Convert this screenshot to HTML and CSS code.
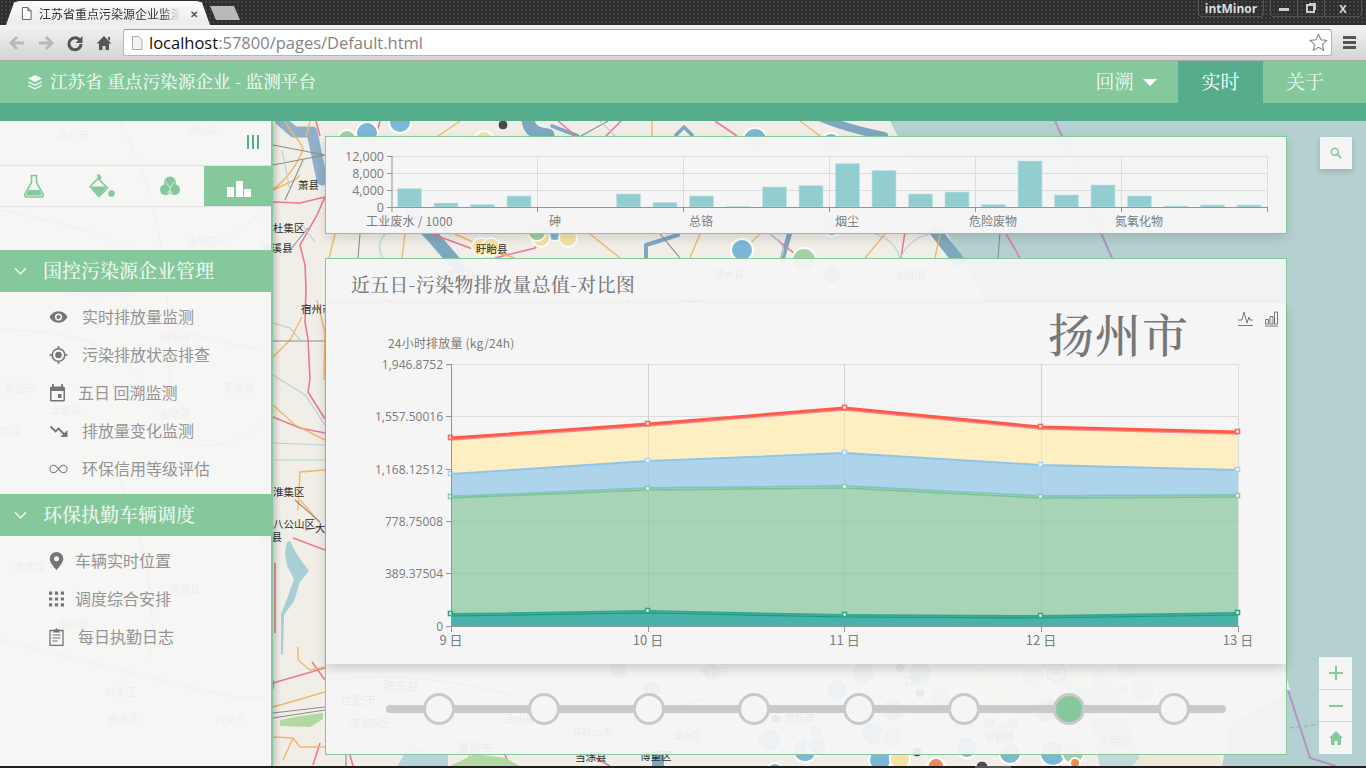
FILE: index.html
```html
<!DOCTYPE html>
<html lang="zh-CN">
<head>
<meta charset="utf-8">
<title>江苏省重点污染源企业监测平台</title>
<link rel="stylesheet" href="styles.css">
</head>
<body>
<div class="browser">
  <div class="tabstrip">
    <div class="tab">
      <svg class="tab-file" viewBox="0 0 12 14"><path d="M1.500.5h6l3.500 3.500v9.500h-9.500zM7.500.5v3.500h3.500" fill="#fff" stroke="#555"/></svg>
      <span class="tab-title">江苏省重点污染源企业监测</span>
      <span class="tab-close">✕</span>
    </div>
    <div class="newtab"></div>
    <div class="winbtns">
      <div class="winuser">intMinor</div>
      <div class="wincontrols">
        <div class="winc"><span class="wmin"></span></div>
        <div class="winc"><span class="wmax"></span></div>
        <div class="winc wclose">X</div>
      </div>
    </div>
  </div>
  <div class="toolbar">
    <svg class="navi" viewBox="0 0 18 18"><path d="M16 9H4M9 3L3 9l6 6" fill="none" stroke="#b9b9b9" stroke-width="3"/></svg>
    <svg class="navi" viewBox="0 0 18 18"><path d="M2 9h12M9 3l6 6-6 6" fill="none" stroke="#b9b9b9" stroke-width="3"/></svg>
    <svg class="navi" viewBox="0 0 18 18"><path d="M14 6.500A6 6 0 1 0 15 10" fill="none" stroke="#555" stroke-width="3"/><path d="M16.500 2v7h-7z" fill="#555"/></svg>
    <svg class="navi" viewBox="0 0 18 18"><path d="M9 2L1.500 9.500H4V16h3.500v-4h3v4H14V9.500h2.500z M13 3h2v4l-2-2z" fill="#555"/></svg>
    <div class="omnibox">
      <svg class="omni-file" viewBox="0 0 12 14"><path d="M1.500.5h6l3.500 3.500v9.500h-9.500z" fill="#f4f4f4" stroke="#aaa"/></svg>
      <span class="host">localhost</span><span class="urlrest">:57800/pages/Default.html</span>
      <svg class="star" viewBox="0 0 20 20"><path d="M10 1.500l2.600 5.600 6.100.7-4.500 4.200 1.200 6.100L10 15.100l-5.400 3 1.200-6.100-4.500-4.200 6.100-.7z" fill="#fff" stroke="#888" stroke-width="1.200"/></svg>
    </div>
    <div class="burger"><i></i><i></i><i></i></div>
  </div>
</div>

<header class="appbar">
  <div class="brand">
    <svg class="brand-icon" viewBox="0 0 16 16"><path d="M8 1l7 3.500L8 8 1 4.500z M1.500 7.200L8 10.400l6.500-3.200L15 8.500 8 12 1 8.500z M1.500 10.700L8 13.900l6.500-3.200.5 1.300L8 15.500 1 12z" fill="#f2faf5"/></svg>
    <span>江苏省 重点污染源企业 - 监测平台</span>
  </div>
  <nav class="nav">
    <div class="nav-item nav-back">回溯<span class="caret"></span></div>
    <div class="nav-item nav-active">实时</div>
    <div class="nav-item">关于</div>
  </nav>
</header>
<div class="subbar"></div>

<main class="stage">
  <svg class="map" viewBox="0 121 1366 645" preserveAspectRatio="none">
    <rect x="0" y="121" width="1366" height="645" fill="#b5d0d0"/>
    <path d="M0 121H890L905 150 960 258 1030 370 1120 500 1200 600 1280 655 1290 690 1230 725 1222 766H0z" fill="#f1eee8"/>
    <path d="M1100 766L1090 720 1060 680 1010 640 950 560 880 480H960L1040 600 1120 690 1142 766z" fill="#c4dada"/>
    <path d="M1055 121l7 15 40 99 10 23M1288 690l22 68 26 8" stroke="#b294c4" stroke-width="2" fill="none"/>
    <path d="M1290 728l50-6M1320 745l30-8" stroke="#8f9fe0" stroke-width="1" stroke-dasharray="4 3" fill="none"/>
    <path d="M398 766l10-20 40 8v12z" fill="#b5d4dc"/>
    <!-- rivers -->
    <g fill="none" stroke="#7fa8c0" stroke-linejoin="round" stroke-linecap="round">
      <path stroke-width="11" stroke="#8fb0c8" d="M280 120l14 12h18l10 48"/>
      <path stroke-width="13" d="M528 118c0 10 6 16 20 17"/>
      <path stroke-width="3.500" d="M552 126l26 10M676 135l8-8 8 8"/>
      <path stroke-width="8" d="M822 118c14 6 34 12 62 18"/>
      <path stroke-width="13" d="M412 214l22 24 24 28"/>
      <path stroke-width="4" d="M646 258v-13l32-10"/>
      <path stroke-width="5" d="M790 232l-8 28"/>
      <path stroke-width="12" d="M936 232l22 28"/>
      <path stroke-width="12" d="M658 756v12"/>
    </g>
    <!-- pink roads -->
    <path fill="none" stroke="#e87a95" stroke-width="1.600" d="M273 202l27 1 25-6M325 197l-8 18-17 30 5 20 1 23-1 34 3 17 2 40-2 13 17 27M273 417l27 11 25 5M293 538l32 12M275 563v70M273 683l52-15M312 662l13 18M320 743l-7 22M316 121l4 15M380 121l-4 15M558 121l18 15M621 121l-15 15M715 121l22 15M432 234l60 22M495 258l40-10 10-14M770 234l30 24M905 232l-4 26M1005 232l15 26M350 755l3 11M505 755l5 11M590 755l20 11M1050 755l10 11M1190 755l-12 11"/>
    <!-- faint under-panel roads -->
    <path fill="none" stroke="#e87a95" stroke-width="1.300" d="M0 210q60 12 90 22l50 20q60 22 133 -50M0 270q100 60 273 -20M120 300q60 40 150 50M0 330q110 0 140 50l40 60q50 20 93 -30M120 121q30 60 40 120t10 150M120 480q40 100 30 180M0 640q120 30 200 50t73-10M330 680q100-10 200 20t200-10M360 270q50 60 120 90t140 0 180 40M620 270q40 130-10 210"/>
    <!-- orange roads -->
    <path fill="none" stroke="#f2b66a" stroke-width="1.400" d="M285 121c5 12 15 18 18 28-5 16-20 34-30 40M273 190l22-10 5-5M302 317l-12 23-17 17M317 300l8 33-1 47M273 405l22 20 30 15M325 470l-25 2-2 38M300 500l20 23M298 647v13l12 10 15-3M273 707l52-15M273 737l20 1 7 9h25M293 738l-10 22M310 121l-4 15M438 136l22-15M652 121v15M800 121l20 15M335 234l-6 24M405 234l-3 24M455 234l40 18 20 6M590 234l30 24M700 234l-10 24M760 234q-15 12-15 24M885 234l-20 24M940 234l-5 24M470 755l-5 11M1170 755l-10 11"/>
    <!-- gray roads -->
    <path fill="none" stroke="#8d8d8d" stroke-width="1.100" d="M273 341h52M273 713l52-6M273 718l52-8M581 136l27-15M290 250l18-22M285 200l18-40M273 145l52 10M273 165l52-10M346 755v11M360 234l-2 24M660 234l20 24M1000 232l-2 26M295 500l25 22M305 530l15-3"/>
    <!-- thin blue lines -->
    <path fill="none" stroke="#b4d3d4" stroke-width="1.200" d="M273 323l17 5 10 12M273 375l32 20 20 30M273 443l52 2M273 460l52 0M282 150l8 40M300 222l15 20M600 121l15 15M385 234q-10 12-2 24M770 234q20 14 10 24M875 234q20 6 25 24M930 234q-20 4-30 24"/>
    <path d="M290 541l8 15 11 15-9 11-6 19-10 14-1 40-2-1v-40l7-18 6-17-7-13-2-13 2-11z" fill="#a9cfd6"/>
    <path d="M280 720l20-4 23-3v6l-13 8-30-1z" fill="#b3d9a3"/>
    <path d="M450 766l25-12 30 4 15 8z" fill="#b3d9a3"/>
    <path d="M1142 755h72q8 0 8 11h-90z" fill="#efe8d8"/>

    <!-- bubbles -->
    <g stroke="#fff" stroke-width="2">
      <g fill="#7db7d8">
        <circle cx="367" cy="133" r="11"/><circle cx="400" cy="122" r="11"/><circle cx="755" cy="140" r="12"/><circle cx="831" cy="143" r="10"/><circle cx="555" cy="232" r="9"/><circle cx="742" cy="250" r="11"/><circle cx="832" cy="226" r="10"/><circle cx="832" cy="274" r="10"/>
        <circle cx="619" cy="670" r="10"/><circle cx="651" cy="690" r="10"/><circle cx="712" cy="672" r="10"/><circle cx="837" cy="690" r="11"/><circle cx="769" cy="740" r="12"/><circle cx="805" cy="750" r="12"/><circle cx="817" cy="745" r="10"/><circle cx="775" cy="771" r="8"/>
        <circle cx="863" cy="673" r="12"/><circle cx="920" cy="673" r="12"/><circle cx="860" cy="707" r="12"/><circle cx="893" cy="710" r="12"/><circle cx="1057" cy="673" r="12"/><circle cx="873" cy="733" r="12"/><circle cx="1047" cy="710" r="13"/><circle cx="1053" cy="753" r="13"/><circle cx="1010" cy="753" r="11"/><circle cx="880" cy="760" r="11"/><circle cx="967" cy="747" r="11"/>
      </g>
      <g fill="#f6e3a4">
        <circle cx="484" cy="141" r="10"/><circle cx="481" cy="247" r="9"/><circle cx="491" cy="247" r="9"/><circle cx="541" cy="238" r="9"/><circle cx="568" cy="238" r="9"/>
        <circle cx="1083" cy="680" r="9"/><circle cx="980" cy="677" r="10"/><circle cx="900" cy="759" r="10"/><circle cx="943" cy="737" r="9"/><circle cx="1000" cy="693" r="9"/>
      </g>
      <g fill="#a5cfa5">
        <circle cx="347" cy="139" r="9"/><circle cx="537" cy="232" r="9"/><circle cx="804" cy="260" r="12"/><circle cx="1033" cy="677" r="12"/><circle cx="1127" cy="670" r="11"/><circle cx="1143" cy="690" r="12"/><circle cx="940" cy="697" r="11"/><circle cx="1003" cy="733" r="12"/><circle cx="893" cy="737" r="11"/><circle cx="1073" cy="753" r="11"/>
      </g>
      <g fill="#ee9a84">
        <circle cx="816" cy="731" r="7"/><circle cx="692" cy="302" r="7"/><circle cx="1123" cy="690" r="6"/><circle cx="990" cy="723" r="7"/><circle cx="1013" cy="723" r="7"/><circle cx="1056" cy="672" r="6"/>
      </g>
      <circle cx="936" cy="766" r="8" fill="#ec8a55"/>
      <circle cx="1075" cy="763" r="5" fill="#ec8a55"/>
    </g>
    <g fill="#4b4b49" stroke="#fff">
      <circle cx="503" cy="125" r="5"/><circle cx="982" cy="767" r="6"/><circle cx="776" cy="719" r="5"/><circle cx="900" cy="668" r="5"/><circle cx="920" cy="693" r="5"/><circle cx="917" cy="752" r="5"/>
    </g>

    <g class="maptext">
      <text x="298" y="189">萧县</text><text x="273" y="232">杜集区</text><text x="261" y="252">濉溪县</text><text x="301" y="313">宿州市</text>
      <text x="273" y="496">淮集区</text><text x="273" y="528">八公山区</text><text x="261" y="541">寿县</text><text x="315" y="532">大</text>
      <text x="476" y="253">盱眙县</text><text x="575" y="761">当涂县</text><text x="640" y="760">博望区</text>
    </g>
    <g class="maptext mapfaint">
      <text x="58" y="139">商丘市</text><text x="187" y="134">砀山县</text><text x="188" y="245">永城市</text><text x="160" y="341">涡阳县</text><text x="224" y="392">蒙城县</text><text x="4" y="392">界首市</text><text x="51" y="414">太和县</text><text x="160" y="418">利辛县</text><text x="0" y="435">泉县</text>
      <text x="14" y="571">淮滨县</text><text x="170" y="593">霍邱县</text><text x="58" y="628">固始县</text><text x="106" y="696">叶集区</text><text x="108" y="723">金寨县</text><text x="215" y="723">六安市</text>
      <text x="714" y="278">涟水县</text><text x="897" y="280">射阳县</text><text x="445" y="278">泗洪县</text>
      <text x="340" y="655">北城新区</text><text x="700" y="676">句容市</text><text x="785" y="722">金坛市</text>
      <text x="900" y="685">江阴</text><text x="1100" y="745">崇明区</text><text x="985" y="742">常熟市</text>
      <text x="350" y="727">滨湖新区</text><text x="505" y="722">含山县</text><text x="572" y="736">马鞍山市</text><text x="672" y="740">溧水区</text>
    </g>
    <g class="maptext mapbig">
      <text x="383" y="691">肥东县</text><text x="340" y="705">合肥市</text><text x="457" y="753">巢湖市</text>
    </g>
  </svg>

  <aside class="sidebar">
    <div class="side-top">
      <svg class="side-toggle" viewBox="0 0 12 14"><path d="M1 0v14M6 0v14M11 0v14" stroke="#55ad8b" stroke-width="2"/></svg>
    </div>
    <div class="side-tabs">
      <div class="side-tab">
        <svg viewBox="0 0 22 24"><path d="M7.500 1.500h7M8.500 1.500v7L2 20a2 2 0 0 0 1.800 3h14.400A2 2 0 0 0 20 20L13.500 8.500v-7" fill="none" stroke="#85c89c" stroke-width="1.600"/><path d="M5.500 16h11l2.500 5.500H3z" fill="#85c89c"/></svg>
      </div>
      <div class="side-tab">
        <svg class="ico-bucket" viewBox="0 0 26 24"><path d="M9 .5l2.500 4.500" stroke="#85c89c" stroke-width="3" fill="none"/><path d="M1 12.500L9 4.500l9.500 9.500L10 22.500z" fill="#f5f5f5" stroke="#85c89c" stroke-width="1.600"/><path d="M1.500 12.500h16.500l-8 9.500z" fill="#85c89c"/><circle cx="22.500" cy="19.500" r="3.200" fill="#85c89c"/></svg>
      </div>
      <div class="side-tab">
        <svg class="ico-tri" viewBox="0 0 22 22"><circle cx="11" cy="7" r="6.500" fill="#85c89c"/><circle cx="6" cy="15" r="6" fill="#85c89c"/><circle cx="16" cy="15" r="6" fill="#85c89c"/><path d="M6 6l5 7 5-7M11 13v7M8 19l3-3 3 3" fill="none" stroke="#f5f5f5" stroke-width=".9"/></svg>
      </div>
      <div class="side-tab side-tab-on">
        <svg viewBox="0 0 24 16"><path d="M0 6h7v10H0zM9 0h7v16H9zM17 8h7v8h-7z" fill="#fff"/></svg>
      </div>
    </div>

    <div class="group group-first">
      <svg class="chev" viewBox="0 0 14 8"><path d="M1 1l6 6 6-6" fill="none" stroke="#eef8f1" stroke-width="1.500"/></svg>
      <span>国控污染源企业管理</span>
    </div>
    <ul class="menu">
      <li><svg viewBox="0 0 20 14"><path d="M10 1C5.500 1 2 4 .5 7 2 10 5.500 13 10 13s8-3 9.500-6C18 4 14.500 1 10 1z" fill="#757575"/><circle cx="10" cy="7" r="3.800" fill="#f5f5f5"/><circle cx="10" cy="7" r="2.200" fill="#757575"/></svg><span>实时排放量监测</span></li>
      <li><svg viewBox="0 0 20 20"><circle cx="10" cy="10" r="7" fill="none" stroke="#757575" stroke-width="1.800"/><circle cx="10" cy="10" r="3.600" fill="#757575"/><path d="M10 0v3M10 17v3M0 10h3M17 10h3" stroke="#757575" stroke-width="1.800"/></svg><span>污染排放状态排查</span></li>
      <li class="li-cal"><svg viewBox="0 0 16 18"><path d="M2 2.500h12a1.500 1.500 0 0 1 1.500 1.500v12a1.500 1.500 0 0 1-1.500 1.500H2A1.500 1.500 0 0 1 .5 16V4A1.500 1.500 0 0 1 2 2.500z" fill="#757575"/><path d="M3.500 0v3M12.500 0v3" stroke="#757575" stroke-width="1.800"/><path d="M2 7h12v9H2z" fill="#f5f5f5"/><path d="M8.500 10H12v4H8.500z" fill="#757575"/></svg><span>五日 回溯监测</span></li>
      <li class="li-trend"><svg viewBox="0 0 18 12"><path d="M1 1.500l5 5 3-3 7 7" fill="none" stroke="#757575" stroke-width="1.800"/><path d="M18 5v7h-7z" fill="#757575"/></svg><span>排放量变化监测</span></li>
      <li><svg viewBox="0 0 20 10"><path d="M5 1a4 4 0 1 0 0 8c4 0 6-8 10-8a4 4 0 1 1 0 8C11 9 9 1 5 1z" fill="none" stroke="#757575" stroke-width="1.100"/></svg><span>环保信用等级评估</span></li>
    </ul>

    <div class="group">
      <svg class="chev" viewBox="0 0 14 8"><path d="M1 1l6 6 6-6" fill="none" stroke="#eef8f1" stroke-width="1.500"/></svg>
      <span>环保执勤车辆调度</span>
    </div>
    <ul class="menu menu-b">
      <li><svg viewBox="0 0 14 18"><path d="M7 0a6.800 6.800 0 0 0-6.800 6.800C.2 11.500 7 18 7 18s6.800-6.500 6.800-11.200A6.800 6.800 0 0 0 7 0z" fill="#757575"/><circle cx="7" cy="6.800" r="2.500" fill="#f5f5f5"/></svg><span>车辆实时位置</span></li>
      <li><svg viewBox="0 0 14 14"><path d="M0 0h3v3H0zM5.500 0h3v3h-3zM11 0h3v3h-3zM0 5.500h3v3H0zM5.500 5.500h3v3h-3zM11 5.500h3v3h-3zM0 11h3v3H0zM5.500 11h3v3h-3zM11 11h3v3h-3z" fill="#757575"/></svg><span>调度综合安排</span></li>
      <li class="li-clip"><svg viewBox="0 0 15 18"><path d="M1 2.500h13v15H1z" fill="none" stroke="#757575" stroke-width="1.300"/><path d="M5 3V1.500h1.500L7.500 0l1 1.500H10V3l1 1.500H4z" fill="#757575"/><path d="M3.500 7h8M3.500 10h8M3.500 13h5" stroke="#757575" stroke-width="1.100"/></svg><span>每日执勤日志</span></li>
    </ul>
  </aside>

  <section class="content">
    <div class="panel panel-bars">
      <svg class="chart" width="960" height="96" viewBox="326 137 960 96">
        <g class="grid">
          <path d="M392 156.500H1267M392 173.500H1267M392 190.500H1267M537.500 156.500V207M683.500 156.500V207M829.500 156.500V207M975.500 156.500V207M1121.500 156.500V207M1267.500 156.500V207"/>
        </g>
        <g class="bars">
          <rect x="397.500" y="188.500" width="24" height="18.500"/><rect x="434" y="203" width="24" height="4"/><rect x="470.500" y="204.500" width="24" height="2.500"/><rect x="507" y="196" width="24" height="11"/>
          <rect x="616.500" y="194" width="24" height="13"/><rect x="653" y="202.500" width="24" height="4.500"/><rect x="689.500" y="196" width="24" height="11"/><rect x="726" y="206.500" width="24" height=".5"/>
          <rect x="762.500" y="187" width="24" height="20"/><rect x="799" y="185.500" width="24" height="21.500"/><rect x="835.500" y="163.500" width="24" height="43.500"/><rect x="872" y="170.500" width="24" height="36.500"/>
          <rect x="908.500" y="194" width="24" height="13"/><rect x="945" y="192" width="24" height="15"/><rect x="981.500" y="204.500" width="24" height="2.500"/><rect x="1018" y="161" width="24" height="46"/>
          <rect x="1054.500" y="195" width="24" height="12"/><rect x="1091" y="185" width="24" height="22"/><rect x="1127.500" y="196" width="24" height="11"/><rect x="1164" y="206" width="24" height="1"/>
          <rect x="1200.500" y="205" width="24" height="2"/><rect x="1237" y="205" width="24" height="2"/>
        </g>
        <path class="axis" d="M392 156V207M387 156.500H392M387 173.500H392M387 190.500H392M387 207.500H1267M392 207V212M537.500 207V212M683.500 207V212M829.500 207V212M975.500 207V212M1121.500 207V212M1267.500 207V212"/>
        <g class="axis-label right big">
          <text x="384" y="161">12,000</text><text x="384" y="178">8,000</text><text x="384" y="195">4,000</text><text x="384" y="212">0</text>
        </g>
        <g class="axis-label">
          <text class="wide" x="366" y="226">工业废水 / 1000</text><text x="549" y="226">砷</text><text x="689" y="226">总铬</text><text x="835" y="226">烟尘</text><text x="969" y="226">危险废物</text><text x="1115" y="226">氮氧化物</text>
        </g>
      </svg>
    </div>

    <div class="panel panel-main">
      <h2 class="panel-title">近五日-污染物排放量总值-对比图</h2>
      <div class="chart-card">
        <svg class="chart" width="960" height="361" viewBox="326 303 960 361">
          <path class="grid" d="M451 364.500H1238M451 416.500H1238M451 469.500H1238M451 521.500H1238M451 573.500H1238M648.500 364V626M844.500 364V626M1041.500 364V626M1238.500 364V626"/>
          <path fill="#fdeebf" fill-opacity=".95" d="M451 438L648 424 844.500 408 1041 427 1238 432V470L1041 465 844.500 453 648 461 451 474z"/>
          <path fill="#aed4ec" d="M451 474L648 461 844.500 453 1041 465 1238 470V496L1041 497 844.500 487 648 489 451 497z"/>
          <path fill="#a7d4b6" d="M451 497L648 489 844.500 487 1041 497 1238 496V613L1041 616 844.500 615 648 611 451 614z"/>
          <path fill="#48b2ab" d="M451 614L648 611 844.500 615 1041 616 1238 613V626H451z"/>
          <path class="grid-over" d="M451 521.500H1238M451 573.500H1238M648.500 364V626M844.500 364V626M1041.500 364V626"/>
          <g fill="none">
            <path stroke="#f08fa0" stroke-width="2.500" d="M451 439.500L648 425.500 844.500 409.500 1041 428.500 1238 433.500"/>
            <path stroke="#ff5a45" stroke-width="2.800" d="M451 438L648 424 844.500 408 1041 427 1238 432"/>
            <path stroke="#8cc5e8" stroke-width="1.800" d="M451 474L648 461 844.500 453 1041 465 1238 470"/>
            <path stroke="#82c6bc" stroke-width="1.800" d="M451 496.500L648 488 844.500 486 1041 496 1238 495"/>
            <path stroke="#7cc295" stroke-width="1.500" d="M451 498L648 490 844.500 488 1041 498 1238 497"/>
            <path stroke="#3aa886" stroke-width="1.800" d="M451 614L648 611 844.500 615 1041 616 1238 613"/>
            <path stroke="#0f9d8d" stroke-width="1.200" d="M451 616L648 613 844.500 617 1041 618 1238 615"/>
          </g>
          <g class="pts pts-red"><rect x="448.500" y="435.500" width="4" height="4"/><rect x="645.500" y="421.500" width="4" height="4"/><rect x="842.500" y="405.500" width="4" height="4"/><rect x="1038.500" y="424.500" width="4" height="4"/><rect x="1235.500" y="429.500" width="4" height="4"/></g>
          <g class="pts pts-blue"><rect x="448.500" y="471.500" width="4" height="4"/><rect x="645.500" y="458.500" width="4" height="4"/><rect x="842.500" y="450.500" width="4" height="4"/><rect x="1038.500" y="462.500" width="4" height="4"/><rect x="1235.500" y="467.500" width="4" height="4"/></g>
          <g class="pts pts-green"><rect x="448.500" y="494.500" width="4" height="4"/><rect x="645.500" y="486.500" width="4" height="4"/><rect x="842.500" y="484.500" width="4" height="4"/><rect x="1038.500" y="494.500" width="4" height="4"/><rect x="1235.500" y="493.500" width="4" height="4"/></g>
          <g class="pts pts-teal"><rect x="448.500" y="611.500" width="4" height="4"/><rect x="645.500" y="608.500" width="4" height="4"/><rect x="842.500" y="612.500" width="4" height="4"/><rect x="1038.500" y="613.500" width="4" height="4"/><rect x="1235.500" y="610.500" width="4" height="4"/></g>
          <path class="axis" d="M451.500 364V626M446 364.500H451M446 416.500H451M446 469.500H451M446 521.500H451M446 573.500H451M446 626.500H1238M451.500 626V632M648.500 626V632M844.500 626V632M1041.500 626V632M1238.500 626V632"/>
          <g class="axis-label right">
            <text x="443" y="369">1,946.8752</text><text x="443" y="421">1,557.50016</text><text x="443" y="474">1,168.12512</text><text x="443" y="526">778.75008</text><text x="443" y="578">389.37504</text><text x="443" y="631">0</text>
          </g>
          <g class="axis-label center">
            <text x="451" y="645">9 日</text><text x="648" y="645">10 日</text><text x="844.500" y="645">11 日</text><text x="1041" y="645">12 日</text><text x="1238" y="645">13 日</text>
          </g>
          <text class="axis-label unit" x="388" y="348">24小时排放量 (kg/24h)</text>
          <text class="city" x="1048" y="352">扬州市</text>
          <g class="toolicon">
            <path d="M1238 320h4l2-8 3 11 2-6 1 3h3M1238 325.500h15"/>
            <path d="M1265.500 319.500h3v4.500h-3zM1270 316.500h3v7.500h-3zM1274.500 312h3v12h-3zM1265 326h13"/>
          </g>
        </svg>
      </div>
      <div class="timeline">
        <div class="track"></div>
        <div class="nodes">
          <span class="node"></span><span class="node"></span><span class="node"></span><span class="node"></span><span class="node"></span><span class="node"></span><span class="node node-on"></span><span class="node"></span>
        </div>
      </div>
    </div>
  </section>

  <div class="tool tool-search">
    <svg viewBox="0 0 14 14"><circle cx="5.500" cy="5.500" r="4" fill="none" stroke="#85c89c" stroke-width="1.800"/><path d="M8.500 8.500l4.500 4.500" stroke="#85c89c" stroke-width="2.200"/></svg>
  </div>
  <div class="zoombox">
    <div class="zoomb"><svg viewBox="0 0 14 14"><path d="M7 0v14M0 7h14" stroke="#85c89c" stroke-width="2"/></svg></div>
    <div class="zoomb"><svg viewBox="0 0 14 14"><path d="M0 7h14" stroke="#85c89c" stroke-width="2"/></svg></div>
    <div class="zoomb"><svg viewBox="0 0 14 14"><path d="M7 0L0 7h2v7h3.500v-4h3v4H12V7h2z" fill="#85c89c"/></svg></div>
  </div>
</main>
<div class="taskedge"><span></span></div>
</body>
</html>
```
FILE: styles.css
```css
* { box-sizing: border-box; }
html, body { margin: 0; height: 100%; }
body {
  width: 1366px; height: 768px; overflow: hidden;
  display: flex; flex-direction: column;
  font-family: "Noto Sans CJK SC", "Open Sans", sans-serif;
  background: #222;
}
ul { list-style: none; margin: 0; padding: 0; }

/* browser frame */
.browser { flex: none; height: 61px; display: flex; flex-direction: column; }
.tabstrip {
  flex: none; height: 25px; display: flex; align-items: flex-end; padding-left: 6px; gap: 3px;
  background-color: #2e2e2e;
  background-image: radial-gradient(#444 1px, transparent 1px);
  background-size: 4px 4px;
}
.tab {
  width: 204px; height: 24px; display: flex; align-items: center; padding: 0 12px 0 15px;
  background: linear-gradient(#fafafa, #ececec);
  clip-path: polygon(0 100%, 8px 6%, 13px 0, 191px 0, 196px 6%, 204px 100%);
  font-size: 12px; color: #333;
}
.tab-file { width: 11px; height: 13px; margin-right: 7px; flex: none; }
.tab-title {
  width: 141px; overflow: hidden; white-space: nowrap; flex: none;
  -webkit-mask-image: linear-gradient(90deg, #000 88%, transparent);
  mask-image: linear-gradient(90deg, #000 88%, transparent);
}
.tab-close { margin-left: auto; font-size: 10px; font-weight: 700; color: #555; }
.newtab {
  width: 30px; height: 14px; margin: 0 0 5px -3px; background: #b9b9b9;
  clip-path: polygon(0 0, 24px 0, 30px 100%, 6px 100%);
}
.winbtns { margin-left: auto; align-self: flex-start; display: flex; gap: 6px; margin-right: 4px; }
.winuser {
  width: 66px; height: 17px; text-align: center; color: #ddd;
  font: 700 12px/17px "Open Sans", sans-serif;
  border: 1px solid #555; border-top: 0; border-radius: 0 0 4px 4px;
}
.wincontrols {
  width: 92px; height: 17px; display: flex; border: 1px solid #555; border-top: 0; border-radius: 0 0 4px 4px;
}
.winc { flex: 1; display: flex; align-items: center; justify-content: center; border-left: 1px solid #555; color: #ddd; }
.winc:first-child { border-left: 0; }
.wclose { flex: 1.400; font: 700 11px "Open Sans", sans-serif; }
.wmin { width: 10px; height: 3px; background: #ccc; margin-top: 3px; }
.wmax { width: 9px; height: 9px; border: 2px solid #ccc; box-shadow: 2px -2px 0 -1px #ccc; }
.toolbar {
  flex: 1; display: flex; align-items: center; padding: 0 8px; gap: 11px;
  background: linear-gradient(#f3f3f3, #d4d4d4);
  border-bottom: 1px solid #a8a8a8;
}
.navi { width: 18px; height: 18px; flex: none; }
.omnibox {
  flex: 1; height: 27px; margin-left: -1px; display: flex; align-items: center; padding-left: 7px;
  background: #fff; border: 1px solid #b4b4b4; border-top-color: #999; border-radius: 3px;
  font: 16.500px/25px "Open Sans", sans-serif; color: #848484;
}
.omni-file { width: 12px; height: 14px; margin-right: 6px; flex: none; }
.host { color: #111; }
.star { width: 19px; height: 19px; margin-left: auto; margin-right: 3px; }
.burger { width: 13px; display: flex; flex-direction: column; gap: 2px; margin-right: 2px; }
.burger i { display: block; height: 3px; background: #555; }

/* app header */
.appbar {
  flex: none; height: 42px; display: flex; align-items: stretch; justify-content: space-between;
  background: #85c89c; color: #eef8f1;
  font-family: "Noto Serif CJK SC", "Noto Sans CJK SC", serif;
}
.brand { display: flex; align-items: center; gap: 7px; padding: 0 0 3px 27px; font-size: 17.600px; font-weight: 500; }
.brand-icon { width: 16px; height: 16px; margin-top: 3px; }
.nav { display: flex; padding-right: 19px; }
.nav-item { width: 84px; display: flex; align-items: center; justify-content: center; font-size: 19px; padding-bottom: 3px; }
.nav-back { width: 92px; gap: 9px; padding-right: 12px; }
.nav-active { background: #55ad8b; color: #fff; width: 85px; }
.caret { width: 0; height: 0; border: 7px solid transparent; border-top: 7px solid #fff; border-bottom: 0; margin-top: 4px; }
.subbar { flex: none; height: 18px; background: #55ad8b; }

/* map stage */
.stage { flex: none; height: 645px; position: relative; display: flex; overflow: hidden; background: #f1eee8; }
.map { position: absolute; inset: 0; width: 100%; height: 100%; }
.maptext text { font-size: 10.500px; fill: #2c2c2c; }
.mapfaint text { fill: #555; font-size: 10px; }
.mapbig text { fill: #555; font-size: 12px; }

/* sidebar */
.sidebar {
  flex: none; width: 273px; position: relative;
  background: rgba(246,246,246,.95);
  border-right: 2px solid #85c89c;
  box-shadow: 3px 0 6px rgba(0,0,0,.2);
}
.side-top { height: 44px; display: flex; align-items: flex-start; justify-content: flex-end; padding: 14px 12px 0 0; }
.side-toggle { width: 12px; height: 14px; }
.side-tabs {
  height: 42px; display: grid; grid-template-columns: 68px 68px 68px 67px;
  border-top: 1px solid #e3e3e3; border-bottom: 1px solid #e3e3e3;
}
.side-tab { display: flex; align-items: center; justify-content: center; }
.side-tab svg { width: 22px; height: 24px; }
.side-tab .ico-bucket { width: 26px; }
.side-tab .ico-tri { width: 20px; height: 20px; }
.side-tab-on { background: #85c89c; margin-right: -2px; }
.side-tab-on svg { width: 24px; height: 16px; margin-top: 5px; }
.group {
  height: 42px; display: flex; align-items: center; gap: 16px; padding: 0 0 0 14px;
  background: #85c89c; color: #eef8f1; margin-right: -2px;
  font-family: "Noto Serif CJK SC", "Noto Sans CJK SC", serif; font-size: 19px; font-weight: 500;
}
.group span { margin-top: -3px; }
.group-first { margin-top: 43px; }
.chev { width: 13px; height: 8px; }
.menu { padding: 6px 0 6px 49px; }
.menu li { height: 38px; display: flex; align-items: center; gap: 14px; color: #949494; font-size: 16px; }
.menu li span { margin-top: -2px; }
.menu svg { width: 19px; height: 18px; flex: none; }
.menu .li-cal { gap: 12px; }
.menu .li-cal svg { width: 17px; }
.menu .li-trend svg { height: 12px; }
.menu-b li { gap: 11px; }
.menu-b svg { width: 15px !important; }
.li-clip { gap: 14px !important; }

/* content */
.content { flex: 1; padding: 15px 79px 0 52px; display: flex; flex-direction: column; gap: 24px; position: relative; }
.panel {
  border: 1px solid #85c89c;
  background: rgba(245,245,245,.93);
}
.panel-bars { height: 98px; background: rgba(245,245,245,.97); box-shadow: 0 4px 10px rgba(0,0,0,.12); }
.panel-main { height: 497px; display: flex; flex-direction: column; background: rgba(245,245,245,.93); }
.panel-title {
  flex: none; height: 44px; margin: 0; padding: 14px 0 0 25px;
  font: 500 18.800px/22px "Noto Serif CJK SC", "Noto Sans CJK SC", serif; color: #7b7b7b; letter-spacing: .5px;
}
.chart-card { flex: none; height: 361px; background: rgba(245,245,245,.97); box-shadow: 0 5px 10px rgba(0,0,0,.16); position: relative; }
.chart { display: block; overflow: visible; }
.grid { fill: none; stroke: #dcdcdc; stroke-width: 1; }
.grid path { fill: none; stroke: #dcdcdc; }
.grid-over { fill: none; stroke: rgba(120,120,120,.12); }
.bars rect { fill: #92cdd0; stroke: #c4e3e4; stroke-width: .6; }
.axis { fill: none; stroke: #949494; stroke-width: 1; }
.axis-label text, text.axis-label { font-family: "Noto Sans CJK SC", sans-serif; font-size: 12px; fill: #7c7c7c; }
.axis-label.right text { text-anchor: end; font-family: "Open Sans", sans-serif; }
.axis-label.big text { font-size: 12.500px; }
.axis-label.center text { text-anchor: middle; font-size: 13px; }
.axis-label .wide { letter-spacing: .2px; }
text.unit { letter-spacing: .2px; }
.city { font-family: "Noto Serif CJK SC", "Noto Sans CJK SC", serif; font-size: 46px; font-weight: 500; fill: #777; letter-spacing: 1px; }
.toolicon path { fill: none; stroke: #777; stroke-width: 1; }
.pts rect { fill: #fff; stroke-width: 1.600; }
.pts-red rect { stroke: #ff6a55; }
.pts-blue rect { stroke: #a7d3ee; }
.pts-green rect { stroke: #8ecba8; }
.pts-teal rect { stroke: #2fa888; }
.timeline { flex: 1; position: relative; display: flex; align-items: center; padding: 0 60px; }
.track { position: absolute; left: 60px; right: 60px; top: 50%; height: 8px; margin-top: -4px; background: #c9c9c9; border-radius: 4px; }
.nodes { position: relative; flex: 1; display: flex; justify-content: space-between; padding: 0 36px 0 37px; }
.node { width: 32px; height: 32px; border-radius: 50%; border: 3px solid #c9c9c9; background: #f5f5f5; }
.node-on { background: #85c89c; }

/* map tools */
.tool, .zoombox { position: absolute; background: #f5f5f5; box-shadow: 0 3px 6px rgba(0,0,0,.15); }
.tool-search { left: 1320px; top: 16px; width: 32px; height: 32px; display: flex; align-items: center; justify-content: center; }
.tool-search svg { width: 12px; height: 12px; }
.zoombox { left: 1319px; top: 536px; width: 33px; height: 97px; display: flex; flex-direction: column; box-shadow: none; }
.zoomb { flex: 1; display: flex; align-items: center; justify-content: center; border-top: 1px solid #c4dcd5; }
.zoomb:first-child { border-top: 0; }
.zoomb svg { width: 14px; height: 14px; }
.taskedge { flex: 1; background: #1f1f1f; padding-left: 975px; }
.taskedge span { display: block; width: 36px; height: 100%; background: #555; }
```
